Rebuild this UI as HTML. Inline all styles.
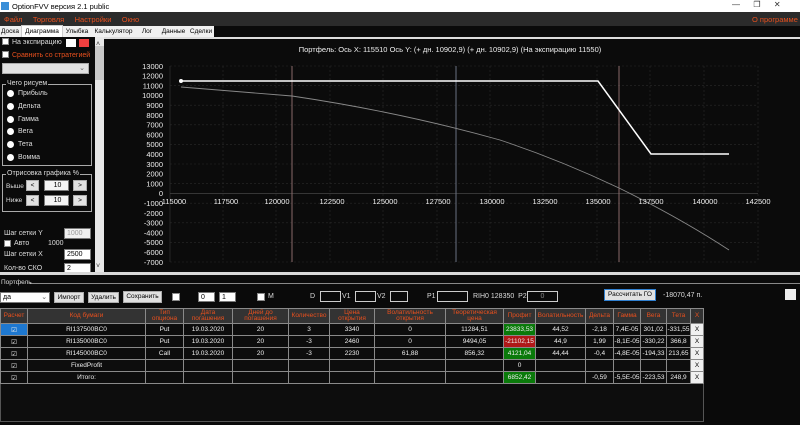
<!DOCTYPE html><html><head><meta charset="utf-8"><style>
*{margin:0;padding:0;box-sizing:border-box}
body{width:800px;height:425px;overflow:hidden;background:#0a0a0a;font-family:"Liberation Sans",sans-serif;font-size:7px;color:#ddd;position:relative}
.a{position:absolute;white-space:nowrap}
.red{color:#e8501e}
.btn{position:absolute;background:#e1e1e1;border:1px solid #adadad;color:#000;text-align:center;font-size:6.5px;line-height:9px;overflow:hidden}
.inp{position:absolute;background:#fff;border:1px solid #7a7a7a;color:#000;font-size:7px;padding-left:2px;line-height:9px}
.cb{position:absolute;width:7px;height:7px;background:#fff;border:1px solid #888}
.rad{position:absolute;width:7px;height:7px;border-radius:50%;background:#fff}
.tab{position:absolute;top:27px;color:#000;font-size:6.5px;height:10px;padding-top:1px;text-align:center}
table{position:absolute;border-collapse:collapse;left:0;top:308px;width:703px;table-layout:fixed}
td{border:1px solid #8a8a8a;height:12px;text-align:center;font-size:6.5px;color:#eee;overflow:hidden;white-space:nowrap}
tr.h td{height:15px;background:#333;color:#e8501e;font-size:6.5px;line-height:6.5px}
.g{background:#0a7a0a}.r{background:#b01818}
.x{background:#f0f0f0;color:#000}
</style></head><body>
<div class="a" style="left:0;top:0;width:800px;height:12px;background:#fff;color:#000;font-size:7.5px;padding:2px 0 0 12px">OptionFVV версия 2.1 public</div>
<div class="a" style="left:1px;top:2px;width:8px;height:8px;background:#3a8fd8"></div>
<div class="a" style="left:732px;top:0;color:#333;font-size:8px">—&nbsp;&nbsp;&nbsp;&nbsp;&nbsp;&nbsp;❐&nbsp;&nbsp;&nbsp;&nbsp;&nbsp;&nbsp;✕</div>
<div class="a" style="left:0;top:12px;width:800px;height:14px;background:#2b2b2b"></div>
<div class="a red" style="left:4px;top:15px;font-size:7.5px">Файл&nbsp;&nbsp;&nbsp;&nbsp;&nbsp;Торговля&nbsp;&nbsp;&nbsp;&nbsp;&nbsp;Настройки&nbsp;&nbsp;&nbsp;&nbsp;&nbsp;Окно</div>
<div class="a red" style="left:752px;top:15px;font-size:7.5px">О программе</div>
<div class="a" style="left:0;top:26px;width:214px;height:11px;background:#f0f0f0"></div>
<div class="tab" style="left:0;width:20px">Доска</div>
<div class="a" style="left:21px;top:25px;width:42px;height:12px;border:1px solid #ccc;border-bottom:none;background:#fff"></div>
<div class="tab" style="left:21px;width:42px">Диаграмма</div>
<div class="tab" style="left:64px;width:26px">Улыбка</div>
<div class="tab" style="left:92px;width:43px">Калькулятор</div>
<div class="tab" style="left:136px;width:22px">Лог</div>
<div class="tab" style="left:159px;width:29px">Данные</div>
<div class="tab" style="left:189px;width:24px">Сделки</div>
<div class="a" style="left:104px;top:37px;width:696px;height:2px;background:#ddd"></div>
<!-- left panel -->
<div class="a" style="left:95px;top:37px;width:9px;height:235px;background:#e8e8e8"></div>
<div class="a" style="left:96px;top:41px;color:#333;font-size:7px">˄</div>
<div class="a" style="left:96px;top:263px;color:#333;font-size:7px">˅</div>
<div class="a" style="left:95px;top:46px;width:9px;height:34px;background:#c8c8c8"></div>
<div class="cb" style="left:2px;top:38px"></div><div class="a" style="left:12px;top:39px">На экспирацию</div>
<div class="a" style="left:66px;top:39px;width:10px;height:8px;background:#fff"></div>
<div class="a" style="left:79px;top:39px;width:10px;height:8px;background:#f04040"></div>
<div class="cb" style="left:2px;top:51px"></div><div class="a red" style="left:12px;top:52px">Сравнить со стратегией</div>
<div class="a" style="left:2px;top:63px;width:87px;height:11px;background:#e0e0e0;border:1px solid #aaa;color:#666;text-align:right;padding-right:3px">⌄</div>
<div class="a" style="left:2px;top:84px;width:90px;height:82px;border:1px solid #aaa"></div>
<div class="a" style="left:6px;top:80px;background:#0a0a0a;padding:0 1px">Чего рисуем</div>
<div class="rad" style="left:7px;top:90px"></div><div class="a" style="left:18px;top:90px">Прибыль</div>
<div class="rad" style="left:7px;top:103px"></div><div class="a" style="left:18px;top:103px">Дельта</div>
<div class="rad" style="left:7px;top:116px"></div><div class="a" style="left:18px;top:116px">Гамма</div>
<div class="rad" style="left:7px;top:128px"></div><div class="a" style="left:18px;top:128px">Вега</div>
<div class="rad" style="left:7px;top:141px"></div><div class="a" style="left:18px;top:141px">Тета</div>
<div class="rad" style="left:7px;top:154px"></div><div class="a" style="left:18px;top:154px">Вомма</div>
<div class="a" style="left:2px;top:174px;width:90px;height:38px;border:1px solid #aaa"></div>
<div class="a" style="left:6px;top:170px;background:#0a0a0a;padding:0 1px">Отрисовка графика %</div>
<div class="a" style="left:6px;top:183px;font-size:6.5px">Выше</div><div class="btn" style="left:26px;top:180px;width:13px;height:11px">&lt;</div><div class="inp" style="left:44px;top:180px;width:25px;height:11px;text-align:center;background:#f4f4f4">10</div><div class="btn" style="left:73px;top:180px;width:14px;height:11px">&gt;</div>
<div class="a" style="left:6px;top:197px;font-size:6.5px">Ниже</div><div class="btn" style="left:26px;top:195px;width:13px;height:11px">&lt;</div><div class="inp" style="left:44px;top:195px;width:25px;height:11px;text-align:center;background:#f4f4f4">10</div><div class="btn" style="left:73px;top:195px;width:14px;height:11px">&gt;</div>
<div class="a" style="left:4px;top:230px">Шаг сетки Y</div><div class="inp" style="left:64px;top:228px;width:27px;height:11px;color:#999;background:#f0f0f0">1000</div>
<div class="cb" style="left:4px;top:240px"></div><div class="a" style="left:14px;top:240px">Авто</div><div class="a" style="left:48px;top:240px">1000</div>
<div class="a" style="left:4px;top:251px">Шаг сетки X</div><div class="inp" style="left:64px;top:249px;width:27px;height:11px">2500</div>
<div class="a" style="left:4px;top:265px">Кол-во СКО</div><div class="inp" style="left:64px;top:263px;width:27px;height:11px">2</div>
<!-- chart -->
<svg class="a" style="left:104px;top:39px" width="696" height="233" viewBox="104 39 696 233">
<rect x="104" y="39" width="696" height="233" fill="#0b0b0b"/>
<g stroke="#2a2a2a" stroke-width="0.6" stroke-dasharray="2,2">
<line x1="170" y1="66" x2="758" y2="66"/><line x1="170" y1="85.6" x2="758" y2="85.6"/><line x1="170" y1="105.2" x2="758" y2="105.2"/><line x1="170" y1="124.8" x2="758" y2="124.8"/><line x1="170" y1="144.4" x2="758" y2="144.4"/><line x1="170" y1="164" x2="758" y2="164"/><line x1="170" y1="183.6" x2="758" y2="183.6"/><line x1="170" y1="203.2" x2="758" y2="203.2"/><line x1="170" y1="222.8" x2="758" y2="222.8"/><line x1="170" y1="242.4" x2="758" y2="242.4"/><line x1="170" y1="262" x2="758" y2="262"/>
<line x1="223" y1="66" x2="223" y2="262"/><line x1="276" y1="66" x2="276" y2="262"/><line x1="330" y1="66" x2="330" y2="262"/><line x1="383" y1="66" x2="383" y2="262"/><line x1="437" y1="66" x2="437" y2="262"/><line x1="490" y1="66" x2="490" y2="262"/><line x1="543" y1="66" x2="543" y2="262"/><line x1="597" y1="66" x2="597" y2="262"/><line x1="650" y1="66" x2="650" y2="262"/><line x1="704" y1="66" x2="704" y2="262"/><line x1="758" y1="66" x2="758" y2="262"/>
</g>
<line x1="170" y1="66" x2="170" y2="262" stroke="#333" stroke-width="0.7"/>
<line x1="170" y1="193.4" x2="758" y2="193.4" stroke="#444" stroke-width="0.8"/>
<line x1="292" y1="66" x2="292" y2="262" stroke="#8a6a6a" stroke-width="1"/>
<line x1="456" y1="66" x2="456" y2="262" stroke="#6a7080" stroke-width="1"/>
<line x1="619" y1="66" x2="619" y2="262" stroke="#8a6a6a" stroke-width="1"/>
<path d="M181 87 L292 96 Q400 112 500 140 Q560 160 619 188 Q680 218 729 250" fill="none" stroke="#888" stroke-width="0.9"/>
<path d="M181 81 L598 81 L651 154 L729 154" fill="none" stroke="#fff" stroke-width="1.5"/>
<circle cx="181" cy="81" r="2" fill="#fff"/>
<g fill="#eee" font-size="7.5" font-family="Liberation Sans" text-anchor="end">
<text x="163" y="69">13000</text><text x="163" y="78.6">12000</text><text x="163" y="88.4">11000</text><text x="163" y="98.2">10000</text><text x="163" y="108">9000</text><text x="163" y="117.8">8000</text><text x="163" y="127.6">7000</text><text x="163" y="137.4">6000</text><text x="163" y="147.2">5000</text><text x="163" y="157">4000</text><text x="163" y="166.8">3000</text><text x="163" y="176.6">2000</text><text x="163" y="186.4">1000</text><text x="163" y="196.2">0</text><text x="163" y="206">-1000</text><text x="163" y="215.8">-2000</text><text x="163" y="225.6">-3000</text><text x="163" y="235.4">-4000</text><text x="163" y="245.2">-5000</text><text x="163" y="255">-6000</text><text x="163" y="264.8">-7000</text>
</g>
<g fill="#eee" font-size="7.5" font-family="Liberation Sans" text-anchor="middle">
<text x="174" y="204">115000</text><text x="226" y="204">117500</text><text x="277" y="204">120000</text><text x="332" y="204">122500</text><text x="385" y="204">125000</text><text x="438" y="204">127500</text><text x="492" y="204">130000</text><text x="545" y="204">132500</text><text x="598" y="204">135000</text><text x="651" y="204">137500</text><text x="705" y="204">140000</text><text x="758" y="204">142500</text>
</g>
<text x="450" y="52" fill="#eee" font-size="7.5" font-family="Liberation Sans" text-anchor="middle">Портфель:  Ось X:  115510  Ось Y:   (+ дн. 10902,9)  (+ дн. 10902,9)  (На экспирацию  11550)</text>
</svg>
<!-- bottom -->
<div class="a" style="left:0;top:272px;width:800px;height:3px;background:#d8d8d8"></div>
<div class="a" style="left:30px;top:283px;width:770px;height:1px;background:#888"></div>
<div class="a" style="left:1px;top:279px;font-size:6.5px">Портфель</div>
<div class="inp" style="left:0;top:292px;width:50px;height:11px;background:#fff">да<span style="float:right;color:#666">⌄&nbsp;</span></div>
<div class="btn" style="left:54px;top:292px;width:30px;height:11px">Импорт</div>
<div class="btn" style="left:88px;top:292px;width:31px;height:11px">Удалить</div>
<div class="btn" style="left:123px;top:291px;width:39px;height:12px">Сохранить</div>
<div class="cb" style="left:172px;top:293px;width:8px;height:8px"></div>
<div class="inp" style="left:198px;top:292px;width:17px;height:10px">0</div>
<div class="inp" style="left:219px;top:292px;width:17px;height:10px">1</div>
<div class="cb" style="left:257px;top:293px;width:8px;height:8px"></div><div class="a" style="left:268px;top:293px">M</div>
<div class="a" style="left:310px;top:293px">D</div><div class="a" style="left:320px;top:291px;width:21px;height:11px;border:1px solid #ccc"></div>
<div class="a" style="left:342px;top:293px">V1</div><div class="a" style="left:355px;top:291px;width:21px;height:11px;border:1px solid #ccc"></div>
<div class="a" style="left:377px;top:293px">V2</div><div class="a" style="left:390px;top:291px;width:18px;height:11px;border:1px solid #ccc"></div>
<div class="a" style="left:427px;top:293px">P1</div><div class="a" style="left:437px;top:291px;width:31px;height:11px;border:1px solid #ccc"></div>
<div class="a" style="left:473px;top:293px">RIH0 128350&nbsp;&nbsp;P2</div><div class="a" style="left:527px;top:291px;width:31px;height:11px;border:1px solid #ccc;text-align:center;color:#888;padding-top:1px">0</div>
<div class="btn" style="left:604px;top:289px;width:52px;height:12px;border-color:#3080d0;line-height:10px">Рассчитать ГО</div>
<div class="a" style="left:663px;top:292px">-18070,47 п.</div>
<div class="a" style="left:785px;top:289px;width:11px;height:11px;background:#eee"></div>
<div class="a" style="left:0;top:308px;width:704px;height:114px;border:1px solid #555;background:#0d0d0d"></div>
<table>
<colgroup><col style="width:27px"><col style="width:118px"><col style="width:38px"><col style="width:49px"><col style="width:56px"><col style="width:41px"><col style="width:45px"><col style="width:71px"><col style="width:58px"><col style="width:32px"><col style="width:50px"><col style="width:28px"><col style="width:27px"><col style="width:26px"><col style="width:24px"><col style="width:13px"></colgroup>
<tr class="h"><td>Расчет</td><td>Код бумаги</td><td>Тип<br>опциона</td><td>Дата<br>погашения</td><td>Дней до<br>погашения</td><td>Количество</td><td>Цена<br>открытия</td><td>Волатильность<br>открытия</td><td>Теоретическая<br>цена</td><td>Профит</td><td>Волатильность</td><td>Дельта</td><td>Гамма</td><td>Вега</td><td>Тета</td><td>X</td></tr>
<tr><td style="background:#1e78d0">☑</td><td>RI137500BC0</td><td>Put</td><td>19.03.2020</td><td>20</td><td>3</td><td>3340</td><td>0</td><td>11284,51</td><td class="g">23833,53</td><td>44,52</td><td>-2,18</td><td>7,4E-05</td><td>301,02</td><td>-331,55</td><td class="x">X</td></tr>
<tr><td>☑</td><td>RI135000BC0</td><td>Put</td><td>19.03.2020</td><td>20</td><td>-3</td><td>2460</td><td>0</td><td>9494,05</td><td class="r">-21102,15</td><td>44,9</td><td>1,99</td><td>-8,1E-05</td><td>-330,22</td><td>366,8</td><td class="x">X</td></tr>
<tr><td>☑</td><td>RI145000BC0</td><td>Call</td><td>19.03.2020</td><td>20</td><td>-3</td><td>2230</td><td>61,88</td><td>856,32</td><td class="g">4121,04</td><td>44,44</td><td>-0,4</td><td>-4,8E-05</td><td>-194,33</td><td>213,65</td><td class="x">X</td></tr>
<tr><td>☑</td><td>FixedProfit</td><td></td><td></td><td></td><td></td><td></td><td></td><td></td><td>0</td><td></td><td></td><td></td><td></td><td></td><td class="x">X</td></tr>
<tr><td>☑</td><td>Итого:</td><td></td><td></td><td></td><td></td><td></td><td></td><td></td><td class="g">6852,42</td><td></td><td>-0,59</td><td>-5,5E-05</td><td>-223,53</td><td>248,9</td><td class="x">X</td></tr>
</table>
</body></html>
